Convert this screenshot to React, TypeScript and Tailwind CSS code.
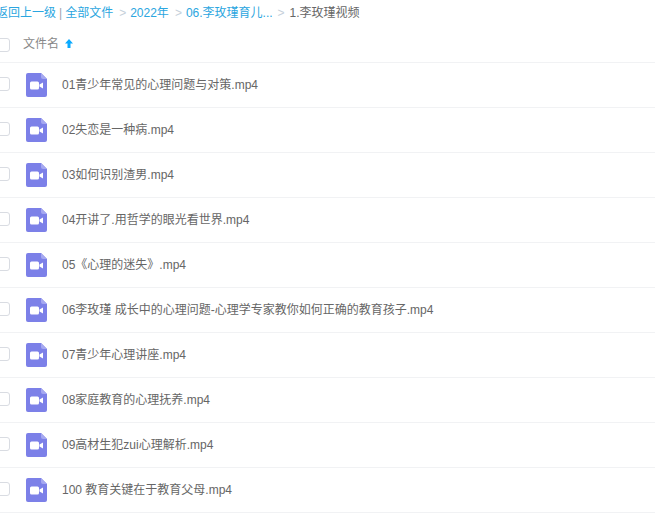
const files = [
  "01青少年常见的心理问题与对策.mp4",
  "02失恋是一种病.mp4",
  "03如何识别渣男.mp4",
  "04开讲了.用哲学的眼光看世界.mp4",
  "05《心理的迷失》.mp4",
  "06李玫瑾 成长中的心理问题-心理学专家教你如何正确的教育孩子.mp4",
  "07青少年心理讲座.mp4",
  "08家庭教育的心理抚养.mp4",
  "09高材生犯zui心理解析.mp4",
  "100 教育关键在于教育父母.mp4",
];

const font = { fontFamily: '"Liberation Sans", "Noto Sans CJK SC", sans-serif' };

function FileIcon() {
  return (
    <svg width="21" height="24" viewBox="0 0 21 24" className="block shrink-0">
      <path d="M2 0H15L21 6V22a2 2 0 0 1-2 2H2a2 2 0 0 1-2-2V2a2 2 0 0 1 2-2Z" fill="#7c80e8" />
      <path d="M15 0L21 6H17a2 2 0 0 1-2-2Z" fill="#a5a8f0" />
      <rect x="4" y="8.5" width="9" height="8" rx="1.5" fill="#fff" />
      <path d="M13.5 11.5L17 9.5V15.5L13.5 13.5Z" fill="#fff" />
    </svg>
  );
}

function Checkbox({ className }: { className: string }) {
  return <div className={`h-[14px] w-[14px] shrink-0 rounded-[3px] border border-[#d9dce2] bg-white ${className}`} />;
}

export default function App() {
  return (
    <div className="h-[521px] w-[655px] overflow-hidden bg-white text-[12px]" style={font}>
      <div className="-ml-1 w-[659px]">
        <div className="flex h-[25px] items-center whitespace-nowrap text-[#2ba6e0]">
          <span>返回上一级</span>
          <span className="ml-[3px] text-[#9aa3ad]">|</span>
          <span className="ml-[3px]">全部文件</span>
          <span className="ml-[6px] mr-[4px] text-[#c5d0da]">&gt;</span>
          <span>2022年</span>
          <span className="ml-[6px] mr-[4px] text-[#c5d0da]">&gt;</span>
          <span>06.李玫瑾育儿...</span>
          <span className="ml-[5px] mr-[5px] text-[#c5d0da]">&gt;</span>
          <span className="text-[#666]">1.李玫瑾视频</span>
        </div>
        <div className="flex h-[38px] items-center border-b border-[#f1f2f4]">
          <Checkbox className="mt-[2px]" />
          <span className="ml-[13px] text-[#888]">文件名</span>
          <svg width="8" height="9" viewBox="0 0 8 9" className="ml-[6px]">
            <path d="M4 0L8 4.5H5.5V9H2.5V4.5H0Z" fill="#09aaff" />
          </svg>
        </div>
        {files.map((name) => (
          <div key={name} className="flex h-[45px] items-center border-b border-[#f1f2f4]">
            <Checkbox className="-mt-[2px]" />
            <div className="ml-4">
              <FileIcon />
            </div>
            <span className="ml-[15px] whitespace-nowrap text-[#666]">{name}</span>
          </div>
        ))}
      </div>
    </div>
  );
}
